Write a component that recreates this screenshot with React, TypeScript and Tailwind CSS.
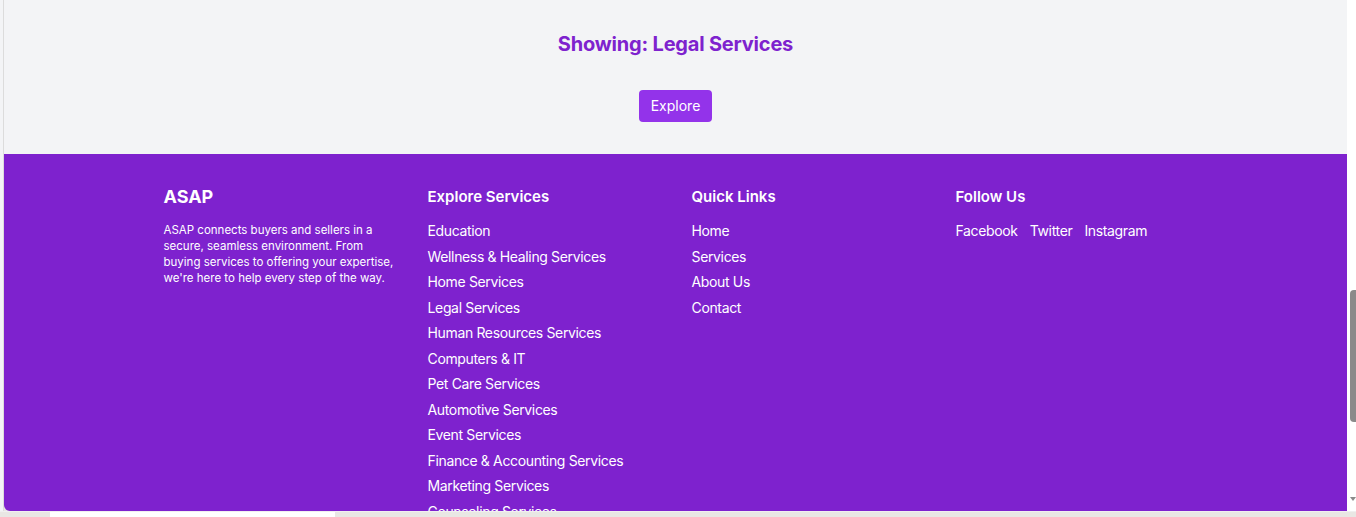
import React from 'react';

const services = [
  'Education',
  'Wellness & Healing Services',
  'Home Services',
  'Legal Services',
  'Human Resources Services',
  'Computers & IT',
  'Pet Care Services',
  'Automotive Services',
  'Event Services',
  'Finance & Accounting Services',
  'Marketing Services',
  'Counseling Services',
];

const quickLinks = ['Home', 'Services', 'About Us', 'Contact'];
const socials = ['Facebook', 'Twitter', 'Instagram'];

function FooterHeading({ children }: { children: React.ReactNode }) {
  return <h3 className="mb-3.5 text-[15px] font-semibold leading-5 text-white">{children}</h3>;
}

export default function App() {
  return (
    <div
      className="flex h-[517px] w-[1356px] flex-col overflow-hidden bg-[#e9e7e4]"
      style={{ fontFamily: 'Inter, "Noto Sans", sans-serif' }}
    >
      <div className="flex h-[511px] shrink-0">
        {/* left frame edge */}
        <div className="w-[4px] shrink-0 border-r border-[#dcdcdc] bg-[#f3f4f6]" />

        <main className="flex min-w-0 flex-1 flex-col overflow-hidden rounded-bl-md bg-[#7e22ce]">
          <section className="flex h-[154px] shrink-0 flex-col items-center bg-[#f3f4f6] pt-[30px]">
            <h2 className="text-xl font-bold leading-7 tracking-[-0.01em] text-[#7e22ce]">
              Showing: Legal Services
            </h2>
            <button className="mt-8 h-8 rounded bg-[#9333ea] px-3 text-sm text-white">Explore</button>
          </section>

          <footer className="flex-1 pt-[33px] text-white">
            <div className="mx-auto grid max-w-5xl grid-cols-4 gap-8">
              <div>
                <h3 className="mb-[15px] text-lg font-bold leading-5">ASAP</h3>
                <p className="text-[11.5px] leading-4">
                  ASAP connects buyers and sellers in a secure, seamless environment. From buying
                  services to offering your expertise, we're here to help every step of the way.
                </p>
              </div>

              <div>
                <FooterHeading>Explore Services</FooterHeading>
                <ul className="flex flex-col gap-[5.5px] text-sm leading-5 tracking-tight">
                  {services.map((s) => (
                    <li key={s}>
                      <a href="#">{s}</a>
                    </li>
                  ))}
                </ul>
              </div>

              <div>
                <FooterHeading>Quick Links</FooterHeading>
                <ul className="flex flex-col gap-[5.5px] text-sm leading-5 tracking-tight">
                  {quickLinks.map((l) => (
                    <li key={l}>
                      <a href="#">{l}</a>
                    </li>
                  ))}
                </ul>
              </div>

              <div>
                <FooterHeading>Follow Us</FooterHeading>
                <div className="flex gap-3 text-sm leading-5 tracking-tight">
                  {socials.map((s) => (
                    <a key={s} href="#">
                      {s}
                    </a>
                  ))}
                </div>
              </div>
            </div>
          </footer>
        </main>

        {/* scrollbar */}
        <div className="relative w-[9px] shrink-0 bg-white">
          <div className="absolute left-[3px] top-[290px] h-[132px] w-[6px] rounded-l-sm bg-[#8a8a8a]" />
          <div className="absolute bottom-[10px] left-[3px] h-0 w-0 border-x-[3px] border-t-[4px] border-x-transparent border-t-[#8a8a8a]" />
        </div>
      </div>
      <div className="flex h-[6px] shrink-0 border-t border-[#f0f0f0]">
        <div className="ml-[50px] w-[285px] bg-white" />
      </div>
    </div>
  );
}
